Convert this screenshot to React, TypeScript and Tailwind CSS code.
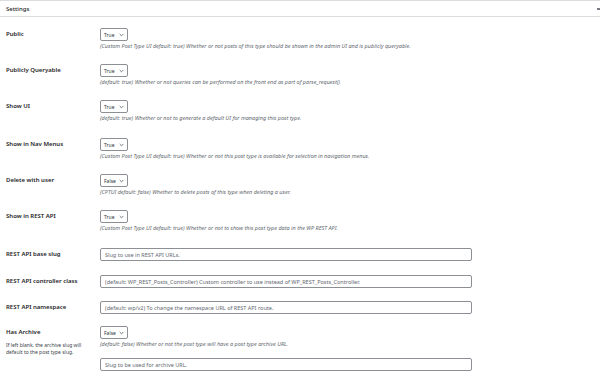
import React from "react";

const font = { fontFamily: '"Noto Sans", "Open Sans", sans-serif' };

function Chevron() {
  return (
    <svg width="5" height="4" viewBox="0 0 5 4" className="ml-auto shrink-0">
      <polyline points="0.7,1 2.5,2.8 4.3,1" fill="none" stroke="#50575e" strokeWidth="0.8" />
    </svg>
  );
}

function Select({ value }: { value: string }) {
  return (
    <div className="flex items-center h-[13px] w-[28px] border border-[#8c8f94] rounded-[2px] bg-white pl-[3px] pr-[3px] text-[5px] leading-[8px] text-[#2c3338]">
      <span>{value}</span>
      <Chevron />
    </div>
  );
}

function Input({ placeholder }: { placeholder: string }) {
  return (
    <div className="flex items-center h-[13px] w-[372px] border border-[#8c8f94] rounded-[2px] bg-white px-[4px] text-[5.5px] leading-[8px] text-[#646970]">
      {placeholder}
    </div>
  );
}

function SelectRow({ label, value, desc, h }: { label: string; value: string; desc: string; h: string }) {
  return (
    <div className={`flex ${h}`}>
      <div className="w-[100px] pl-[6px] pt-[13px] text-[6px] leading-[8px] font-semibold text-[#1d2327]">{label}</div>
      <div className="flex flex-col pt-[11px]">
        <Select value={value} />
        <div className="mt-[1px] text-[5.5px] leading-[8px] italic text-[#646970] whitespace-nowrap">{desc}</div>
      </div>
    </div>
  );
}

function InputRow({ label, placeholder, h }: { label: string; placeholder: string; h: string }) {
  return (
    <div className={`flex ${h}`}>
      <div className="w-[100px] pl-[6px] pt-[15px] text-[6px] leading-[8px] font-semibold text-[#1d2327]">{label}</div>
      <div className="pt-[13px]">
        <Input placeholder={placeholder} />
      </div>
    </div>
  );
}

export default function App() {
  return (
    <div className="w-[600px] h-[377px] bg-white overflow-hidden" style={font}>
      <div className="relative flex items-center h-[17px] border-t border-b border-[#dcdcde] pl-[6px] text-[6px] leading-[8px] font-medium text-[#1d2327]">
        Settings
        <span className="absolute right-0 top-[7px] w-[3px] h-[2px] bg-[#787c82]" />
      </div>
      <SelectRow
        h="h-[36px]"
        label="Public"
        value="True"
        desc="(Custom Post Type UI default: true) Whether or not posts of this type should be shown in the admin UI and is publicly queryable."
      />
      <SelectRow
        h="h-[36px]"
        label="Publicly Queryable"
        value="True"
        desc="(default: true) Whether or not queries can be performed on the front end as part of parse_request()"
      />
      <SelectRow
        h="h-[38px]"
        label="Show UI"
        value="True"
        desc="(default: true) Whether or not to generate a default UI for managing this post type."
      />
      <SelectRow
        h="h-[36px]"
        label="Show in Nav Menus"
        value="True"
        desc="(Custom Post Type UI default: true) Whether or not this post type is available for selection in navigation menus."
      />
      <SelectRow
        h="h-[36px]"
        label="Delete with user"
        value="False"
        desc="(CPTUI default: false) Whether to delete posts of this type when deleting a user."
      />
      <SelectRow
        h="h-[36px]"
        label="Show in REST API"
        value="True"
        desc="(Custom Post Type UI default: true) Whether or not to show this post type data in the WP REST API."
      />
      <InputRow h="h-[27px]" label="REST API base slug" placeholder="Slug to use in REST API URLs." />
      <InputRow
        h="h-[26px]"
        label="REST API controller class"
        placeholder="(default: WP_REST_Posts_Controller) Custom controller to use instead of WP_REST_Posts_Controller."
      />
      <InputRow
        h="h-[27px]"
        label="REST API namespace"
        placeholder="(default: wp/v2) To change the namespace URL of REST API route."
      />
      <div className="flex">
        <div className="w-[100px] pl-[6px] pt-[13px]">
          <div className="text-[6px] leading-[8px] font-semibold text-[#1d2327]">Has Archive</div>
          <div className="mt-[6px] text-[5px] leading-[7px] text-[#3c434a]">
            If left blank, the archive slug will
            <br />
            default to the post type slug.
          </div>
        </div>
        <div className="flex flex-col pt-[11px]">
          <Select value="False" />
          <div className="mt-[1px] text-[5.5px] leading-[8px] italic text-[#646970] whitespace-nowrap">
            (default: false) Whether or not the post type will have a post type archive URL.
          </div>
          <div className="mt-[10px]">
            <Input placeholder="Slug to be used for archive URL." />
          </div>
        </div>
      </div>
    </div>
  );
}
